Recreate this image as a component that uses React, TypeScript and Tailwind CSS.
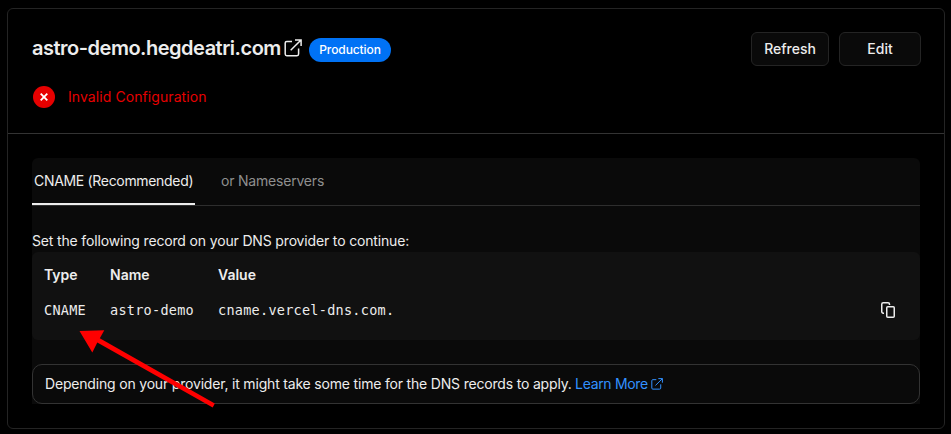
import React from "react";

function ExternalIcon({ className }: { className: string }) {
  return (
    <svg className={className} viewBox="0 0 18 18" fill="none" stroke="currentColor" strokeWidth="1.5">
      <path d="M8 2.500H2.800C1.800 2.500 1.200 3.100 1.200 4.100V15.100C1.200 16.100 1.800 16.700 2.800 16.700H13C14 16.700 14.600 16.100 14.600 15.100V9.500" />
      <path d="M11 .9H17.100V7M17 1L6.700 11.200" />
    </svg>
  );
}

function CopyIcon() {
  return (
    <svg className="h-4 w-4" viewBox="0 0 16 16" fill="none" stroke="currentColor" strokeWidth="1.5">
      <path d="M4 11.250H3.250a1.500 1.500 0 0 1-1.500-1.500v-7.500a1.500 1.500 0 0 1 1.500-1.500H8A1.500 1.500 0 0 1 9.500 2.250V3" />
      <rect x="6.750" y="4.750" width="7.500" height="10.500" rx="1" />
    </svg>
  );
}

const record = [
  { label: "Type", value: "CNAME", width: "w-[66px]" },
  { label: "Name", value: "astro-demo", width: "w-[108px]" },
  { label: "Value", value: "cname.vercel-dns.com.", width: "w-[200px]" },
];

export default function App() {
  return (
    <div className="h-[434px] w-[951px] bg-black pt-2 pl-[7px] font-['Inter',sans-serif] text-sm leading-5 text-[#ededed]">
      <section className="relative h-[421px] w-[938px] rounded-md border border-[#242424]">
        <header className="h-[125px] border-b border-[#333] pt-[23px] pr-[23px] pl-6">
          <div className="flex h-[34px] items-start">
            <h1 className="w-[252px] text-xl leading-8 font-semibold tracking-[-0.49px] whitespace-nowrap">astro-demo.hegdeatri.com</h1>
            <ExternalIcon className="mt-[7px] h-[18px] w-[18px]" />
            <span className="mt-[6px] ml-[7px] flex h-6 w-[82px] items-center justify-center rounded-full bg-[#0072f5] text-xs font-medium tracking-[-0.1px] text-white">Production</span>
            <button className="ml-auto h-[34px] w-[78px] rounded-md border border-[#242424] bg-[#0a0a0a] font-medium">Refresh</button>
            <button className="ml-2.5 h-[34px] w-[82px] rounded-md border border-[#242424] bg-[#0a0a0a] font-medium">Edit</button>
          </div>
          <div className="mt-5 flex h-[22px] items-center text-[#e60000]">
            <span className="ml-px flex h-[22px] w-[22px] items-center justify-center rounded-full bg-[#e60000]">
              <svg className="h-2 w-2" viewBox="0 0 8 8" stroke="white" strokeWidth="1.800"><path d="M.7.700 7.300 7.300M7.300.700.700 7.300" /></svg>
            </span>
            <span className="ml-[13px] tracking-[0.08px]">Invalid Configuration</span>
          </div>
        </header>
        <div className="mt-6 ml-6 w-[888px] rounded-t-md bg-[#0a0a0a]">
          <div className="flex h-12 border-b border-[#2e2e2e]">
            <div className="h-[47px] w-[163px] border-b-2 border-[#ededed] px-0.5 pt-[13px] tracking-[-0.32px] whitespace-nowrap">CNAME (Recommended)</div>
            <div className="ml-[26px] pt-[13px] tracking-[-0.2px] text-[#8f8f8f]">or Nameservers</div>
          </div>
          <p className="h-[46px] pt-[25px] tracking-[-0.157px]">Set the following record on your DNS provider to continue:</p>
          <div className="flex h-[88px] rounded-md bg-[#111] pt-[13px] pl-3">
            {record.map(({ label, value, width }) => (
              <div key={label} className={width}>
                <div className="font-semibold">{label}</div>
                <div className="mt-[15px] font-['DejaVu_Sans_Mono',monospace] text-[13.5px] tracking-[0.27px] whitespace-nowrap">{value}</div>
              </div>
            ))}
            <button className="mt-[37px] mr-6 ml-auto h-4"><CopyIcon /></button>
          </div>
          <div className="h-6" />
          <div className="flex h-10 items-center rounded-[10px] border border-[#333] pl-3 whitespace-nowrap">
            <span className="tracking-[-0.185px]">Depending on your provider, it might take some time for the DNS records to apply.</span>
            <a className="ml-[3.500px] flex items-center tracking-[-0.33px] text-[#3291ff]">Learn More<ExternalIcon className="ml-[3px] h-3 w-3" /></a>
          </div>
        </div>
        <svg className="absolute top-0 left-0 h-[419px] w-[936px]" viewBox="8 9 936 419" fill="red">
          <path d="M79.500 331 104.300 330.300 99.800 338.300 214.800 403.500 212.700 407.500 97.300 342.500 92.300 352.500Z" />
        </svg>
      </section>
    </div>
  );
}
